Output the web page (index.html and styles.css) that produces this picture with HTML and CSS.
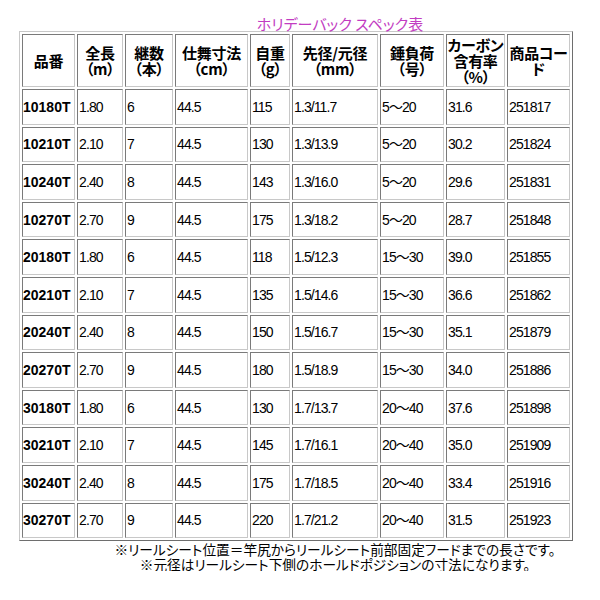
FILE: index.html
```html
<!DOCTYPE html>
<html lang="ja">
<head>
<meta charset="utf-8">
<title>ホリデーバック スペック表</title>
<link rel="stylesheet" href="styles.css">
</head>
<body>
<div class="page">
  <div class="title">ホリデーバック スペック表</div>
  <table class="spec">
    <thead>
      <tr>
        <th class="c1">品番</th>
        <th class="c2">全長<br>（m）</th>
        <th class="c3">継数<br>（本）</th>
        <th class="c4">仕舞寸法<br>（cm）</th>
        <th class="c5">自重<br>（g）</th>
        <th class="c6">先径/元径<br>（mm）</th>
        <th class="c7">錘負荷<br>（号）</th>
        <th class="c8">カーボン<br>含有率<br>（%）</th>
        <th class="c9">商品コー<br>ド</th>
      </tr>
    </thead>
    <tbody>
      <tr><td class="code">10180T</td><td>1.80</td><td>6</td><td>44.5</td><td>115</td><td>1.3/11.7</td><td>5～20</td><td>31.6</td><td>251817</td></tr>
      <tr><td class="code">10210T</td><td>2.10</td><td>7</td><td>44.5</td><td>130</td><td>1.3/13.9</td><td>5～20</td><td>30.2</td><td>251824</td></tr>
      <tr><td class="code">10240T</td><td>2.40</td><td>8</td><td>44.5</td><td>143</td><td>1.3/16.0</td><td>5～20</td><td>29.6</td><td>251831</td></tr>
      <tr><td class="code">10270T</td><td>2.70</td><td>9</td><td>44.5</td><td>175</td><td>1.3/18.2</td><td>5～20</td><td>28.7</td><td>251848</td></tr>
      <tr><td class="code">20180T</td><td>1.80</td><td>6</td><td>44.5</td><td>118</td><td>1.5/12.3</td><td>15～30</td><td>39.0</td><td>251855</td></tr>
      <tr><td class="code">20210T</td><td>2.10</td><td>7</td><td>44.5</td><td>135</td><td>1.5/14.6</td><td>15～30</td><td>36.6</td><td>251862</td></tr>
      <tr><td class="code">20240T</td><td>2.40</td><td>8</td><td>44.5</td><td>150</td><td>1.5/16.7</td><td>15～30</td><td>35.1</td><td>251879</td></tr>
      <tr><td class="code">20270T</td><td>2.70</td><td>9</td><td>44.5</td><td>180</td><td>1.5/18.9</td><td>15～30</td><td>34.0</td><td>251886</td></tr>
      <tr><td class="code">30180T</td><td>1.80</td><td>6</td><td>44.5</td><td>130</td><td>1.7/13.7</td><td>20～40</td><td>37.6</td><td>251898</td></tr>
      <tr><td class="code">30210T</td><td>2.10</td><td>7</td><td>44.5</td><td>145</td><td>1.7/16.1</td><td>20～40</td><td>35.0</td><td>251909</td></tr>
      <tr><td class="code">30240T</td><td>2.40</td><td>8</td><td>44.5</td><td>175</td><td>1.7/18.5</td><td>20～40</td><td>33.4</td><td>251916</td></tr>
      <tr><td class="code">30270T</td><td>2.70</td><td>9</td><td>44.5</td><td>220</td><td>1.7/21.2</td><td>20～40</td><td>31.5</td><td>251923</td></tr>
    </tbody>
  </table>
  <div class="notes">
    <p>※リールシート位置＝竿尻からリールシート前部固定フードまでの長さです。</p>
    <p>※元径はリールシート下側のホールドポジションの寸法になります。</p>
  </div>
</div>
</body>
</html>
```

FILE: styles.css
```css
html, body {
  margin: 0;
  padding: 0;
  background: #ffffff;
}

.page {
  width: 554px;
  margin-left: 19px;
  font-family: "Noto Sans CJK JP", sans-serif;
  font-feature-settings: "palt";
  color: #000;
}

.title {
  margin-top: 16px;
  height: 15px;
  line-height: 15px;
  font-size: 15px;
  color: #c23cc2;
  text-align: center;
  padding-left: 88px;
}

.spec {
  table-layout: fixed;
  width: 554px;
  border-collapse: separate;
  border-spacing: 2px;
  border: 1px solid;
  border-color: #c8c8c8 #6e6e6e #6e6e6e #c8c8c8;
}

.spec th,
.spec td {
  box-sizing: border-box;
  border: 1px solid;
  border-color: #7a7a7a #c8c8c8 #c8c8c8 #7a7a7a;
  padding: 0 1px;
}

.spec th {
  height: 53px;
  padding: 0;
  font-size: 15px;
  line-height: 16px;
  font-weight: 700;
  text-align: center;
  vertical-align: middle;
  white-space: nowrap;
  letter-spacing: -0.3px;
}

.spec td {
  height: 35.6px;
  font-family: "Liberation Sans", "Noto Sans CJK JP", sans-serif;
  font-size: 14px;
  line-height: 16px;
  letter-spacing: -0.9px;
  text-align: left;
  vertical-align: middle;
  white-space: nowrap;
  font-feature-settings: normal;
}

.spec td.code {
  font-weight: 700;
  letter-spacing: 0;
  padding: 0;
}

.c1 { width: 53px; }
.c2 { width: 46px; }
.c3 { width: 48px; }
.c4 { width: 73px; }
.c5 { width: 40px; }
.c6 { width: 86px; }
.c7 { width: 64px; }
.c8 { width: 59px; }
.c9 { width: 63px; }

.notes {
  margin-top: 1px;
  font-size: 13.7px;
  line-height: 14.5px;
  text-align: center;
  padding-left: 78px;
}

.notes p {
  margin: 0;
  white-space: nowrap;
}
```
